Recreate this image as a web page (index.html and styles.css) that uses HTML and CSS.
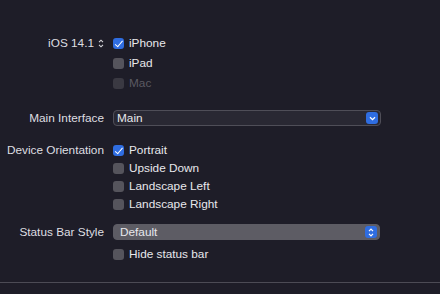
FILE: index.html
```html
<!DOCTYPE html>
<html lang="en">
<head>
    <meta charset="UTF-8">
    <title>Deployment Info</title>
    <link rel="stylesheet" href="styles.css">
</head>
<body>
    <div class="panel">
        <div class="section section-devices">
            <div class="label">
                iOS 14.1
                <svg class="stepper" width="6" height="9" viewBox="0 0 6 9">
                    <path d="M1 3.2 L3 1.2 L5 3.2 M1 5.8 L3 7.8 L5 5.8" fill="none" stroke="#d8d8dc" stroke-width="1.1"/>
                </svg>
            </div>
            <div class="controls">
                <label class="check row-tall"><span class="box checked"></span>iPhone</label>
                <label class="check row-tall"><span class="box"></span>iPad</label>
                <label class="check row-tall disabled"><span class="box"></span>Mac</label>
            </div>
        </div>

        <div class="section section-select">
            <div class="label">Main Interface</div>
            <div class="controls">
                <div class="select">
                    <span class="select-text">Main</span>
                    <span class="select-btn">
                        <svg width="7" height="5" viewBox="0 0 7 5"><path d="M1 1.2 L3.5 3.6 L6 1.2" fill="none" stroke="#fff" stroke-width="1.3"/></svg>
                    </span>
                </div>
            </div>
        </div>

        <div class="section section-orientation">
            <div class="label">Device Orientation</div>
            <div class="controls">
                <label class="check"><span class="box checked"></span>Portrait</label>
                <label class="check"><span class="box"></span>Upside Down</label>
                <label class="check"><span class="box"></span>Landscape Left</label>
                <label class="check"><span class="box"></span>Landscape Right</label>
            </div>
        </div>

        <div class="section section-status">
            <div class="label">Status Bar Style</div>
            <div class="controls">
                <div class="select select-filled">
                    <span class="select-text">Default</span>
                    <span class="select-btn">
                        <svg width="6" height="9" viewBox="0 0 6 9"><path d="M1 3.2 L3 1.2 L5 3.2 M1 5.8 L3 7.8 L5 5.8" fill="none" stroke="#fff" stroke-width="1.2"/></svg>
                    </span>
                </div>
                <label class="check check-hide"><span class="box"></span>Hide status bar</label>
            </div>
        </div>

        <div class="separator"></div>
    </div>
</body>
</html>
```

FILE: styles.css
```css
:root {
    --bg: #1e1d28;
    --text: #e8e8ec;
    --label: #dfdfe2;
    --muted: #5b5a62;
    --box: #55545c;
    --blue: #2f6de1;
}

* {
    margin: 0;
    padding: 0;
    box-sizing: border-box;
}

body {
    background-color: var(--bg);
    color: var(--text);
    font-family: "Liberation Sans", Arial, sans-serif;
    font-size: 11.8px;
    width: 440px;
    height: 294px;
    overflow: hidden;
}

.panel {
    padding-top: 33px;
}

.section {
    display: flex;
    align-items: flex-start;
}

.label {
    width: 104px;
    text-align: right;
    color: var(--label);
    flex-shrink: 0;
    display: flex;
    justify-content: flex-end;
    align-items: center;
    gap: 4px;
    height: 18px;
}

.controls {
    margin-left: 9px;
    display: flex;
    flex-direction: column;
}

.check {
    display: flex;
    align-items: center;
    gap: 5px;
    height: 18px;
    color: var(--text);
}

.row-tall {
    height: 20px;
}

.section-devices .label {
    height: 20px;
}

.box {
    width: 11px;
    height: 11px;
    border-radius: 3px;
    background-color: var(--box);
    position: relative;
}

.box.checked {
    background-color: var(--blue);
}

.box.checked::after {
    content: "";
    position: absolute;
    left: 3.5px;
    top: 1px;
    width: 3px;
    height: 6.5px;
    border: solid #fff;
    border-width: 0 1.6px 1.6px 0;
    transform: rotate(40deg);
}

.disabled {
    color: var(--muted);
}

.disabled .box {
    background-color: #3a3942;
}

.section-select {
    margin-top: 16px;
    align-items: center;
}

.section-select .controls,
.section-status .controls {
    width: 268px;
}

.select {
    height: 16px;
    border: 1px solid #4f4e58;
    border-radius: 4px;
    background-color: #292833;
    display: flex;
    align-items: center;
    justify-content: space-between;
    padding: 0 2px 0 3px;
}

.select-filled {
    background-color: #5d5c64;
    border-color: #5d5c64;
    padding-left: 6px;
    margin-right: 1px;
}

.select-text {
    color: var(--text);
}

.select-btn {
    width: 12px;
    height: 12px;
    border-radius: 3px;
    background-color: var(--blue);
    display: flex;
    align-items: center;
    justify-content: center;
}

.section-orientation {
    margin-top: 14px;
}

.section-status {
    margin-top: 11px;
}

.section-status .label {
    height: 16px;
}

.check-hide {
    margin-top: 5px;
}

.separator {
    margin-top: 19px;
    height: 1px;
    background-color: #4c4b55;
}
```
